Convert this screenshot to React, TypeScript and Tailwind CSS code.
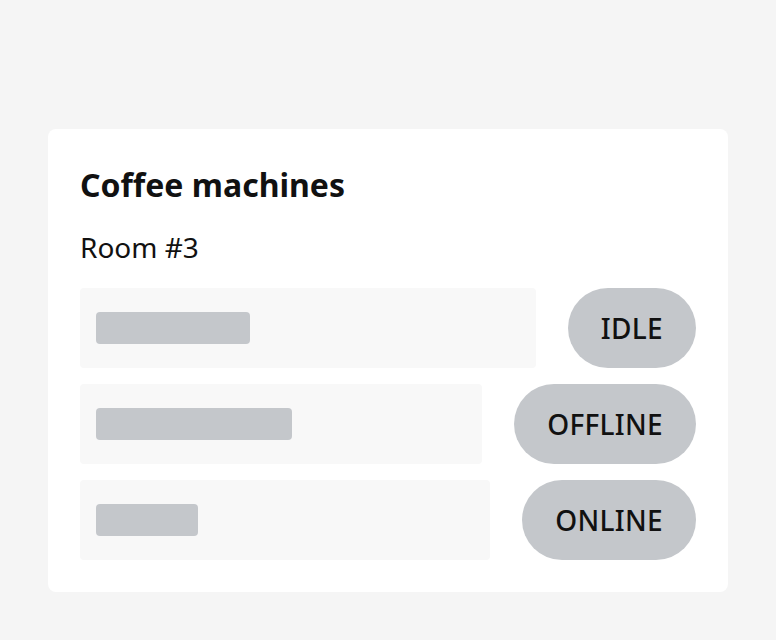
const rows = [
  { id: 1, bar: "w-[154px]", status: "IDLE" },
  { id: 2, bar: "w-[196px]", status: "OFFLINE" },
  { id: 3, bar: "w-[102px]", status: "ONLINE" },
];

export default function App() {
  return (
    <div className="min-h-[640px] bg-[#f5f5f5] pt-[129px] px-12 font-['Noto_Sans',sans-serif] text-[#111]">
      <div className="bg-white rounded-lg p-8">
        <h2 className="text-[32px] font-bold leading-[48px]">Coffee machines</h2>
        <p className="mt-[20px] text-[28px] leading-[36px]">Room #3</p>

        <div className="mt-[23px] flex flex-col gap-4">
          {rows.map(row => (
            <div key={row.id} className="flex items-center gap-8">
              <div className="flex-1 h-20 bg-[#f8f8f8] rounded flex items-center px-4">
                <div className={`${row.bar} h-8 bg-[#c4c7cb] rounded`} />
              </div>
              <span className="h-20 px-[33px] rounded-full bg-[#c4c7cb] flex items-center text-[28px] font-medium tracking-[0.3px]">
                {row.status}
              </span>
            </div>
          ))}
        </div>
      </div>
    </div>
  );
}
